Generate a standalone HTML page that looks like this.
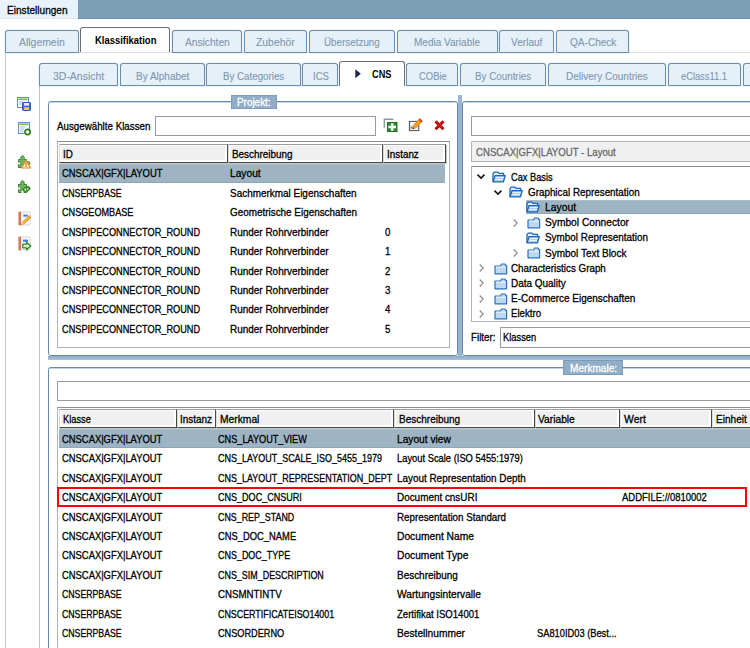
<!DOCTYPE html><html><head><meta charset="utf-8"><title>Einstellungen</title><style>
html,body{margin:0;padding:0;}
body{width:750px;height:648px;overflow:hidden;background:#fff;position:relative;font-family:"Liberation Sans",sans-serif;font-size:11px;color:#000;}
div,span{box-sizing:border-box;}
.a{position:absolute;}
.t{position:absolute;white-space:nowrap;line-height:14px;height:14px;transform-origin:0 50%;-webkit-text-stroke:0.3px;}
.tab{position:absolute;background:#e5f0f8;border:1px solid #688dad;border-radius:3px 3px 0 0;box-shadow:0 0 1px rgba(104,141,173,.8);}
.tabA{position:absolute;background:#fff;border:1px solid #6a7078;border-bottom:none;border-radius:3px 3px 0 0;}
.hd{position:absolute;background:#f0f0f0;border-right:1px solid #484848;border-bottom:1px solid #484848;border-top:1px solid #9c9c9c;border-left:1px solid #d8d8d8;box-shadow:inset -2px -2px 0 #fff,inset 1px 1px 0 #fff,1px 1px 0 rgba(90,90,90,.35);}
.sel{position:absolute;background:#9eb4c3;border-top:1px solid #a6bfd0;border-bottom:1px solid #8aa8bd;}
.inp{position:absolute;background:#fff;border:1px solid #9a9a9a;}
.gb{position:absolute;border:1px solid #668bac;border-radius:2.5px;box-shadow:inset 0 1px 0 rgba(140,170,198,.5);}
.gl{position:absolute;background:#91adc8;border:1px solid #7c9cba;}
svg{position:absolute;overflow:visible;}
</style></head><body>
<div class="a" style="left:0;top:0;width:750px;height:19px;background:#7b9eb5;border-bottom:1px solid #6c91ac;"></div>
<div class="a" style="left:0;top:0;width:78px;height:19px;background:#e9f2fa;border-bottom:1px solid #dbe8f3;"></div>
<div class="t" style="left:7.2px;top:3.1px;transform:scaleX(0.9173);">Einstellungen</div>
<div class="a" style="left:5px;top:52px;width:750px;height:600px;border-left:1px solid #c9c9c9;border-top:1px solid #dcdcdc;"></div>
<div class="tab" style="left:5px;top:29.6px;width:74px;height:23.0px;"></div>
<div class="t" style="left:19.0px;top:35.1px;transform:scaleX(0.948);color:#7f97b2;-webkit-text-stroke:0.1px;">Allgemein</div>
<div class="tabA" style="left:80px;top:27px;width:90px;height:25.4px;"></div>
<div class="t" style="left:94.6px;top:33.1px;transform:scaleX(0.8584);font-weight:bold;-webkit-text-stroke:0;">Klassifikation</div>
<div class="tab" style="left:172px;top:29.6px;width:70px;height:23.0px;"></div>
<div class="t" style="left:184.6px;top:35.1px;transform:scaleX(0.9273);color:#7f97b2;-webkit-text-stroke:0.1px;">Ansichten</div>
<div class="tab" style="left:244px;top:29.6px;width:63px;height:23.0px;"></div>
<div class="t" style="left:256.1px;top:35.1px;transform:scaleX(0.9443);color:#7f97b2;-webkit-text-stroke:0.1px;">Zubehör</div>
<div class="tab" style="left:309px;top:29.6px;width:86px;height:23.0px;"></div>
<div class="t" style="left:324.0px;top:35.1px;transform:scaleX(0.8946);color:#7f97b2;-webkit-text-stroke:0.1px;">Übersetzung</div>
<div class="tab" style="left:397px;top:29.6px;width:101px;height:23.0px;"></div>
<div class="t" style="left:414.2px;top:35.1px;transform:scaleX(0.9096);color:#7f97b2;-webkit-text-stroke:0.1px;">Media Variable</div>
<div class="tab" style="left:499px;top:29.6px;width:55px;height:23.0px;"></div>
<div class="t" style="left:511.0px;top:35.1px;transform:scaleX(0.9168);color:#7f97b2;-webkit-text-stroke:0.1px;">Verlauf</div>
<div class="tab" style="left:556px;top:29.6px;width:73px;height:23.0px;"></div>
<div class="t" style="left:569.6px;top:35.1px;transform:scaleX(0.9143);color:#7f97b2;-webkit-text-stroke:0.1px;">QA-Check</div>
<div class="a" style="left:39px;top:85px;width:750px;height:600px;border-left:1px solid #c4c4c4;"></div>
<div class="tab" style="left:39px;top:63px;width:79px;height:23px;"></div>
<div class="t" style="left:52.6px;top:68.5px;transform:scaleX(0.9517);color:#7f97b2;-webkit-text-stroke:0.1px;">3D-Ansicht</div>
<div class="tab" style="left:120px;top:63px;width:85px;height:23px;"></div>
<div class="t" style="left:135.6px;top:68.5px;transform:scaleX(0.9094);color:#7f97b2;-webkit-text-stroke:0.1px;">By Alphabet</div>
<div class="tab" style="left:206px;top:63px;width:95px;height:23px;"></div>
<div class="t" style="left:222.6px;top:68.5px;transform:scaleX(0.8858);color:#7f97b2;-webkit-text-stroke:0.1px;">By Categories</div>
<div class="tab" style="left:302px;top:63px;width:36px;height:23px;"></div>
<div class="t" style="left:312.6px;top:68.5px;transform:scaleX(0.8613);color:#7f97b2;-webkit-text-stroke:0.1px;">ICS</div>
<div class="tabA" style="left:339px;top:61px;width:66px;height:25px;"></div>
<svg style="left:355px;top:69px" width="7" height="10" viewBox="0 0 7 10"><path d="M0.3 0.3 L5.8 4.8 L0.3 9.3 Z" fill="#1a2452"/></svg>
<div class="t" style="left:372.0px;top:67.1px;transform:scaleX(0.835);font-weight:bold;-webkit-text-stroke:0;">CNS</div>
<div class="tab" style="left:406px;top:63px;width:52px;height:23px;"></div>
<div class="t" style="left:418.6px;top:68.5px;transform:scaleX(0.8579);color:#7f97b2;-webkit-text-stroke:0.1px;">COBie</div>
<div class="tab" style="left:460px;top:63px;width:86px;height:23px;"></div>
<div class="t" style="left:474.6px;top:68.5px;transform:scaleX(0.8923);color:#7f97b2;-webkit-text-stroke:0.1px;">By Countries</div>
<div class="tab" style="left:548px;top:63px;width:118px;height:23px;"></div>
<div class="t" style="left:566.1px;top:68.5px;transform:scaleX(0.9102);color:#7f97b2;-webkit-text-stroke:0.1px;">Delivery Countries</div>
<div class="tab" style="left:668px;top:63px;width:73px;height:23px;"></div>
<div class="t" style="left:681.0px;top:68.5px;transform:scaleX(0.8447);color:#7f97b2;-webkit-text-stroke:0.1px;">eClass11.1</div>
<div class="tab" style="left:743px;top:63px;width:57px;height:23px;"></div>
<svg style="left:16px;top:96px" width="16" height="16" viewBox="0 0 16 16"><rect x="1.5" y="1.5" width="11" height="10" fill="#f4f8fd" stroke="#5b8fd6"/><rect x="2.5" y="2.5" width="9" height="1.6" fill="#7db84a"/><rect x="3" y="5.5" width="4" height="1" fill="#a9c6ea"/><rect x="3" y="7.5" width="3" height="1" fill="#a9c6ea"/><rect x="6.5" y="6.5" width="8" height="8" rx="0.8" fill="#3b6fd0" stroke="#2d57b0"/><rect x="8" y="7" width="5" height="2.6" fill="#eaf1fb"/><rect x="8" y="11.3" width="5" height="2.6" fill="#f3d43c"/></svg>
<svg style="left:17px;top:121px" width="16" height="16" viewBox="0 0 16 16"><rect x="1.5" y="1.5" width="11" height="11" fill="#f4f8fd" stroke="#5b8fd6"/><rect x="2.5" y="2.5" width="9" height="1.6" fill="#7db84a"/><rect x="3" y="5.5" width="5" height="1" fill="#a9c6ea"/><rect x="3" y="7.5" width="4" height="1" fill="#a9c6ea"/><rect x="3" y="9.5" width="3" height="1" fill="#a9c6ea"/><circle cx="10.6" cy="11" r="2.6" fill="#fff" stroke="#2f7d1e" stroke-width="1.7"/></svg>
<svg style="left:17px;top:154px" width="16" height="16" viewBox="0 0 16 16"><path d="M1.5 5.5 H4.2 C3.2 4.6 3.6 1.8 5.5 1.8 C7.4 1.8 7.8 4.6 6.8 5.5 H9.5 V8 C10.4 7 13 7.4 13 9.2 C13 11 10.4 11.4 9.5 10.4 V13.5 H6.8 C7.6 12.4 7 11 5.5 11 C4 11 3.4 12.4 4.2 13.5 H1.5 V10.6 C2.6 11.4 3.8 10.8 3.8 9.4 C3.8 8 2.6 7.4 1.5 8.2 Z" fill="#6fb65e" stroke="#2e8428" stroke-width="0.9" stroke-linejoin="round"/><path d="M9 6.2 L13.5 14 L4.5 14 Z" fill="#fff4c8" stroke="#e8891c" stroke-width="1.2" stroke-linejoin="round"/><rect x="8.5" y="8.8" width="1" height="2.8" fill="#b34a00"/><rect x="8.5" y="12.1" width="1" height="0.9" fill="#b34a00"/></svg>
<svg style="left:17px;top:179px" width="16" height="16" viewBox="0 0 16 16"><path d="M1.5 5.5 H4.2 C3.2 4.6 3.6 1.8 5.5 1.8 C7.4 1.8 7.8 4.6 6.8 5.5 H9.5 V8 C10.4 7 13 7.4 13 9.2 C13 11 10.4 11.4 9.5 10.4 V13.5 H6.8 C7.6 12.4 7 11 5.5 11 C4 11 3.4 12.4 4.2 13.5 H1.5 V10.6 C2.6 11.4 3.8 10.8 3.8 9.4 C3.8 8 2.6 7.4 1.5 8.2 Z" fill="#6fb65e" stroke="#2e8428" stroke-width="0.9" stroke-linejoin="round"/><path d="M6.5 9.2 L11 7.6 L13.2 10.2 L9.5 13.2 L6.5 12 Z" fill="#4f9e40" stroke="#2f7d24" stroke-width="0.9"/><rect x="7.6" y="9.8" width="1.4" height="1.6" fill="#e8f4e0"/><rect x="10" y="9.2" width="1.3" height="1.6" fill="#d7c9c0"/></svg>
<svg style="left:17px;top:211px" width="16" height="16" viewBox="0 0 16 16"><rect x="2.2" y="1" width="11" height="13" rx="1.2" fill="#fbfbfb" stroke="#c9c9c9" stroke-width="0.8"/><rect x="1.2" y="0.8" width="2.6" height="13.4" fill="#d24a1e"/><rect x="1.2" y="0.8" width="1.2" height="13.4" fill="#e6c3b6"/><rect x="6.3" y="3.6" width="4.5" height="2" fill="#3f7be0"/><path d="M12.2 4.6 L14 6.4 L6.8 13 L4.4 13.8 L5.2 11.4 Z" fill="#f6b531" stroke="#d9822b" stroke-width="0.8" stroke-linejoin="round"/><path d="M4.4 13.8 L5.2 11.4 L6.8 13 Z" fill="#f3e3c8"/></svg>
<svg style="left:17px;top:236px" width="16" height="16" viewBox="0 0 16 16"><rect x="2.2" y="1" width="11" height="13" rx="1.2" fill="#fbfbfb" stroke="#c9c9c9" stroke-width="0.8"/><rect x="1.2" y="0.8" width="2.6" height="13.4" fill="#d24a1e"/><rect x="1.2" y="0.8" width="1.2" height="13.4" fill="#e6c3b6"/><rect x="6" y="3.6" width="5" height="2.2" fill="#3f7be0"/><path d="M5.8 8.2 L9.6 8.2 L9.6 6.2 L13.8 10 L9.6 13.8 L9.6 11.8 L5.8 11.8 Z" fill="#dff0d2" stroke="#2f8a24" stroke-width="1.3" stroke-linejoin="round"/></svg>
<div class="gb" style="left:48px;top:101px;width:410px;height:255px;"></div>
<div class="gl" style="left:231px;top:94.8px;width:46.4px;height:14.6px;"></div>
<div class="t" style="left:237.2px;top:95.1px;transform:scaleX(0.9009);color:#fff;">Projekt:</div>
<div class="t" style="left:56.6px;top:118.5px;transform:scaleX(0.8879);">Ausgewählte Klassen</div>
<div class="inp" style="left:155px;top:116px;width:221px;height:20px;"></div>
<svg style="left:383px;top:118px" width="15" height="15" viewBox="0 0 15 15"><path d="M1.3 9.8 L1.3 1.3 L10.5 1.3" fill="none" stroke="#8f999b" stroke-width="1.4"/><rect x="4.4" y="4.4" width="9.6" height="9.2" fill="#2f8a2c" stroke="#1c651c" stroke-width="0.9"/><path d="M9.2 5.2 V12.8 M5.4 9 H13" stroke="#fff" stroke-width="2.5"/></svg>
<svg style="left:408px;top:118px" width="15" height="15" viewBox="0 0 15 15"><rect x="1.4" y="3.4" width="9.4" height="9.2" fill="#f1f3f5" stroke="#4c4f52" stroke-width="1"/><rect x="2.6" y="8.6" width="2" height="2" fill="#6f7780"/><path d="M11.8 0.6 L14.4 3.2 L7.6 10 L4.6 10.8 L5.4 7.6 Z" fill="#f6a21e" stroke="#d9701a" stroke-width="0.8" stroke-linejoin="round"/><path d="M11.8 0.6 L14.4 3.2 L13.2 4.4 L10.6 1.8 Z" fill="#dd3b22"/><path d="M4.6 10.8 L4.95 9.4 L6 10.4 Z" fill="#111"/></svg>
<svg style="left:434px;top:120px" width="11" height="11" viewBox="0 0 11 11"><path d="M1.5 1.4 L9.5 9.2 M9.5 1.4 L1.5 9.2" stroke="#8e0a0a" stroke-width="2.9" stroke-linecap="butt"/><path d="M1.7 1.6 L9.3 9 M9.3 1.6 L1.7 9" stroke="#d01414" stroke-width="1.7" stroke-linecap="butt"/></svg>
<div class="a" style="left:57px;top:141px;width:393px;height:207px;border:1px solid #b2b2b2;border-top-color:#8e8e8e;background:#fff;"></div>
<div class="hd" style="left:59px;top:144px;width:169px;height:19px;"></div>
<div class="hd" style="left:228px;top:144px;width:155px;height:19px;"></div>
<div class="hd" style="left:383px;top:144px;width:63px;height:19px;"></div>
<div class="t" style="left:63.2px;top:146.7px;transform:scaleX(0.8909);">ID</div>
<div class="t" style="left:232.1px;top:146.7px;transform:scaleX(0.9007);">Beschreibung</div>
<div class="t" style="left:386.6px;top:146.7px;transform:scaleX(0.8966);">Instanz</div>
<div class="sel" style="left:59px;top:164px;width:386px;height:19px;"></div>
<div class="t" style="left:61.6px;top:166.3px;transform:scaleX(0.8562);">CNSCAX|GFX|LAYOUT</div>
<div class="t" style="left:230.3px;top:166.3px;transform:scaleX(0.9294);">Layout</div>
<div class="t" style="left:61.6px;top:185.75px;transform:scaleX(0.7925);">CNSERPBASE</div>
<div class="t" style="left:230.3px;top:185.75px;transform:scaleX(0.9035);">Sachmerkmal Eigenschaften</div>
<div class="t" style="left:61.6px;top:205.2px;transform:scaleX(0.8284);">CNSGEOMBASE</div>
<div class="t" style="left:230.3px;top:205.2px;transform:scaleX(0.8998);">Geometrische Eigenschaften</div>
<div class="t" style="left:61.6px;top:224.65px;transform:scaleX(0.8348);">CNSPIPECONNECTOR_ROUND</div>
<div class="t" style="left:230.3px;top:224.65px;transform:scaleX(0.905);">Runder Rohrverbinder</div>
<div class="t" style="left:385.2px;top:224.65px;transform:scaleX(0.8816);">0</div>
<div class="t" style="left:61.6px;top:244.1px;transform:scaleX(0.8348);">CNSPIPECONNECTOR_ROUND</div>
<div class="t" style="left:230.3px;top:244.1px;transform:scaleX(0.905);">Runder Rohrverbinder</div>
<div class="t" style="left:385.2px;top:244.1px;transform:scaleX(0.8816);">1</div>
<div class="t" style="left:61.6px;top:263.55px;transform:scaleX(0.8348);">CNSPIPECONNECTOR_ROUND</div>
<div class="t" style="left:230.3px;top:263.55px;transform:scaleX(0.905);">Runder Rohrverbinder</div>
<div class="t" style="left:385.2px;top:263.55px;transform:scaleX(0.8816);">2</div>
<div class="t" style="left:61.6px;top:283.0px;transform:scaleX(0.8348);">CNSPIPECONNECTOR_ROUND</div>
<div class="t" style="left:230.3px;top:283.0px;transform:scaleX(0.905);">Runder Rohrverbinder</div>
<div class="t" style="left:385.2px;top:283.0px;transform:scaleX(0.8816);">3</div>
<div class="t" style="left:61.6px;top:302.45px;transform:scaleX(0.8348);">CNSPIPECONNECTOR_ROUND</div>
<div class="t" style="left:230.3px;top:302.45px;transform:scaleX(0.905);">Runder Rohrverbinder</div>
<div class="t" style="left:385.2px;top:302.45px;transform:scaleX(0.8816);">4</div>
<div class="t" style="left:61.6px;top:321.9px;transform:scaleX(0.8348);">CNSPIPECONNECTOR_ROUND</div>
<div class="t" style="left:230.3px;top:321.9px;transform:scaleX(0.905);">Runder Rohrverbinder</div>
<div class="t" style="left:385.2px;top:321.9px;transform:scaleX(0.8816);">5</div>
<div class="a" style="left:458px;top:95px;width:4px;height:262px;background:#9ab6cf;"></div>
<div class="gb" style="left:462px;top:101px;width:300px;height:255px;"></div>
<div class="inp" style="left:471px;top:116px;width:300px;height:20px;"></div>
<div class="inp" style="left:471px;top:141px;width:300px;height:21px;background:#f0f0f0;border-color:#b4b4b4;"></div>
<div class="t" style="left:475.6px;top:144.7px;transform:scaleX(0.8739);color:#6a6a6a;">CNSCAX|GFX|LAYOUT - Layout</div>
<div class="a" style="left:471px;top:166px;width:300px;height:156px;border:1px solid #b2b2b2;border-top-color:#8e8e8e;background:#fff;"></div>
<div class="sel" style="left:526.4px;top:199.6px;width:230px;height:14.6px;"></div>
<div class="t" style="left:511.2px;top:169.5px;transform:scaleX(0.8399);">Cax Basis</div>
<svg style="left:492.1px;top:170.8px" width="14" height="12" viewBox="0 0 14 12"><path d="M1 10.6 L1 2.6 L2.2 1.2 L6 1.2 L7 2.4 L11.6 2.4 L11.6 4.4" fill="#e2effa" stroke="#1a66b6" stroke-width="1.3" stroke-linejoin="round"/><path d="M1 10.8 L3 4.6 L13.3 4.6 L11.4 10.8 Z" fill="#a9d0f2" stroke="#1a66b6" stroke-width="1.3" stroke-linejoin="round"/><path d="M3.8 6.5 L11.6 6.5 M3.2 8.5 L11 8.5" stroke="#eef6fd" stroke-width="0.9"/></svg>
<svg style="left:476.9px;top:174.4px" width="8" height="5" viewBox="0 0 8 5"><path d="M0.5 0.6 L4 4.1 L7.5 0.6" fill="none" stroke="#111" stroke-width="1.5"/></svg>
<div class="t" style="left:528.1px;top:184.72px;transform:scaleX(0.8954);">Graphical Representation</div>
<svg style="left:509.0px;top:186.0px" width="14" height="12" viewBox="0 0 14 12"><path d="M1 10.6 L1 2.6 L2.2 1.2 L6 1.2 L7 2.4 L11.6 2.4 L11.6 4.4" fill="#e2effa" stroke="#1a66b6" stroke-width="1.3" stroke-linejoin="round"/><path d="M1 10.8 L3 4.6 L13.3 4.6 L11.4 10.8 Z" fill="#a9d0f2" stroke="#1a66b6" stroke-width="1.3" stroke-linejoin="round"/><path d="M3.8 6.5 L11.6 6.5 M3.2 8.5 L11 8.5" stroke="#eef6fd" stroke-width="0.9"/></svg>
<svg style="left:493.8px;top:189.6px" width="8" height="5" viewBox="0 0 8 5"><path d="M0.5 0.6 L4 4.1 L7.5 0.6" fill="none" stroke="#111" stroke-width="1.5"/></svg>
<div class="t" style="left:545.0px;top:199.94px;transform:scaleX(0.9385);">Layout</div>
<svg style="left:525.9px;top:201.2px" width="14" height="12" viewBox="0 0 14 12"><path d="M1 10.6 L1 2.6 L2.2 1.2 L6 1.2 L7 2.4 L11.6 2.4 L11.6 4.4" fill="#e2effa" stroke="#1a66b6" stroke-width="1.3" stroke-linejoin="round"/><path d="M1 10.8 L3 4.6 L13.3 4.6 L11.4 10.8 Z" fill="#a9d0f2" stroke="#1a66b6" stroke-width="1.3" stroke-linejoin="round"/><path d="M3.8 6.5 L11.6 6.5 M3.2 8.5 L11 8.5" stroke="#eef6fd" stroke-width="0.9"/></svg>
<div class="t" style="left:545.0px;top:215.16px;transform:scaleX(0.9282);">Symbol Connector</div>
<svg style="left:527.3px;top:216.9px" width="14" height="12" viewBox="0 0 14 12"><path d="M1 10.8 L1 3 L6.4 3 L7.6 1 L11 1 L12 2.6 L12.6 2.6 L12.6 10.8 Z" fill="#bcd9f2" stroke="#2a72bc" stroke-width="1.2" stroke-linejoin="round"/><path d="M2 4.2 L11.6 4.2" stroke="#eef6fc" stroke-width="1"/></svg>
<svg style="left:512.8px;top:218.5px" width="5" height="8" viewBox="0 0 5 8"><path d="M0.7 0.5 L4.2 4 L0.7 7.5" fill="none" stroke="#8a8a8a" stroke-width="1.1"/></svg>
<div class="t" style="left:545.0px;top:230.38px;transform:scaleX(0.9008);">Symbol Representation</div>
<svg style="left:525.9px;top:231.7px" width="14" height="12" viewBox="0 0 14 12"><path d="M1 10.6 L1 2.6 L2.2 1.2 L6 1.2 L7 2.4 L11.6 2.4 L11.6 4.4" fill="#e2effa" stroke="#1a66b6" stroke-width="1.3" stroke-linejoin="round"/><path d="M1 10.8 L3 4.6 L13.3 4.6 L11.4 10.8 Z" fill="#a9d0f2" stroke="#1a66b6" stroke-width="1.3" stroke-linejoin="round"/><path d="M3.8 6.5 L11.6 6.5 M3.2 8.5 L11 8.5" stroke="#eef6fd" stroke-width="0.9"/></svg>
<div class="t" style="left:545.0px;top:245.6px;transform:scaleX(0.9078);">Symbol Text Block</div>
<svg style="left:527.3px;top:247.3px" width="14" height="12" viewBox="0 0 14 12"><path d="M1 10.8 L1 3 L6.4 3 L7.6 1 L11 1 L12 2.6 L12.6 2.6 L12.6 10.8 Z" fill="#bcd9f2" stroke="#2a72bc" stroke-width="1.2" stroke-linejoin="round"/><path d="M2 4.2 L11.6 4.2" stroke="#eef6fc" stroke-width="1"/></svg>
<svg style="left:512.8px;top:248.9px" width="5" height="8" viewBox="0 0 5 8"><path d="M0.7 0.5 L4.2 4 L0.7 7.5" fill="none" stroke="#8a8a8a" stroke-width="1.1"/></svg>
<div class="t" style="left:511.2px;top:260.82px;transform:scaleX(0.8912);">Characteristics Graph</div>
<svg style="left:493.5px;top:262.5px" width="14" height="12" viewBox="0 0 14 12"><path d="M1 10.8 L1 3 L6.4 3 L7.6 1 L11 1 L12 2.6 L12.6 2.6 L12.6 10.8 Z" fill="#bcd9f2" stroke="#2a72bc" stroke-width="1.2" stroke-linejoin="round"/><path d="M2 4.2 L11.6 4.2" stroke="#eef6fc" stroke-width="1"/></svg>
<svg style="left:479.0px;top:264.1px" width="5" height="8" viewBox="0 0 5 8"><path d="M0.7 0.5 L4.2 4 L0.7 7.5" fill="none" stroke="#8a8a8a" stroke-width="1.1"/></svg>
<div class="t" style="left:511.2px;top:276.04px;transform:scaleX(0.9053);">Data Quality</div>
<svg style="left:493.5px;top:277.7px" width="14" height="12" viewBox="0 0 14 12"><path d="M1 10.8 L1 3 L6.4 3 L7.6 1 L11 1 L12 2.6 L12.6 2.6 L12.6 10.8 Z" fill="#bcd9f2" stroke="#2a72bc" stroke-width="1.2" stroke-linejoin="round"/><path d="M2 4.2 L11.6 4.2" stroke="#eef6fc" stroke-width="1"/></svg>
<svg style="left:479.0px;top:279.3px" width="5" height="8" viewBox="0 0 5 8"><path d="M0.7 0.5 L4.2 4 L0.7 7.5" fill="none" stroke="#8a8a8a" stroke-width="1.1"/></svg>
<div class="t" style="left:511.2px;top:291.26px;transform:scaleX(0.9043);">E-Commerce Eigenschaften</div>
<svg style="left:493.5px;top:293.0px" width="14" height="12" viewBox="0 0 14 12"><path d="M1 10.8 L1 3 L6.4 3 L7.6 1 L11 1 L12 2.6 L12.6 2.6 L12.6 10.8 Z" fill="#bcd9f2" stroke="#2a72bc" stroke-width="1.2" stroke-linejoin="round"/><path d="M2 4.2 L11.6 4.2" stroke="#eef6fc" stroke-width="1"/></svg>
<svg style="left:479.0px;top:294.6px" width="5" height="8" viewBox="0 0 5 8"><path d="M0.7 0.5 L4.2 4 L0.7 7.5" fill="none" stroke="#8a8a8a" stroke-width="1.1"/></svg>
<div class="t" style="left:511.2px;top:306.48px;transform:scaleX(0.8818);">Elektro</div>
<svg style="left:493.5px;top:308.2px" width="14" height="12" viewBox="0 0 14 12"><path d="M1 10.8 L1 3 L6.4 3 L7.6 1 L11 1 L12 2.6 L12.6 2.6 L12.6 10.8 Z" fill="#bcd9f2" stroke="#2a72bc" stroke-width="1.2" stroke-linejoin="round"/><path d="M2 4.2 L11.6 4.2" stroke="#eef6fc" stroke-width="1"/></svg>
<svg style="left:479.0px;top:309.8px" width="5" height="8" viewBox="0 0 5 8"><path d="M0.7 0.5 L4.2 4 L0.7 7.5" fill="none" stroke="#8a8a8a" stroke-width="1.1"/></svg>
<div class="t" style="left:471.0px;top:330.3px;transform:scaleX(0.8873);">Filter:</div>
<div class="inp" style="left:500px;top:327px;width:300px;height:21px;"></div>
<div class="t" style="left:502.6px;top:330.3px;transform:scaleX(0.8482);">Klassen</div>
<div class="a" style="left:48px;top:356px;width:710px;height:4px;background:linear-gradient(#8cabc7 0,#9ab6cf 50%,#aac3d9 100%);"></div>
<div class="gb" style="left:48px;top:367px;width:720px;height:300px;"></div>
<div class="gl" style="left:563px;top:360.4px;width:60px;height:15px;"></div>
<div class="t" style="left:569.6px;top:360.9px;transform:scaleX(0.9173);color:#fff;">Merkmale:</div>
<div class="inp" style="left:57px;top:381px;width:720px;height:20px;"></div>
<div class="a" style="left:57px;top:407px;width:720px;height:260px;border:1px solid #b2b2b2;border-top-color:#8e8e8e;background:#fff;"></div>
<div class="hd" style="left:59px;top:409px;width:118px;height:19px;"></div>
<div class="t" style="left:63.2px;top:412.3px;transform:scaleX(0.8416);">Klasse</div>
<div class="hd" style="left:177px;top:409px;width:39px;height:19px;"></div>
<div class="t" style="left:180.0px;top:412.3px;transform:scaleX(0.9022);">Instanz</div>
<div class="hd" style="left:216px;top:409px;width:178px;height:19px;"></div>
<div class="t" style="left:220.0px;top:412.3px;transform:scaleX(0.9343);">Merkmal</div>
<div class="hd" style="left:394px;top:409px;width:141px;height:19px;"></div>
<div class="t" style="left:398.6px;top:412.3px;transform:scaleX(0.9096);">Beschreibung</div>
<div class="hd" style="left:535px;top:409px;width:85px;height:19px;"></div>
<div class="t" style="left:538.4px;top:412.3px;transform:scaleX(0.9305);">Variable</div>
<div class="hd" style="left:620px;top:409px;width:92px;height:19px;"></div>
<div class="t" style="left:623.6px;top:412.3px;transform:scaleX(0.9465);">Wert</div>
<div class="hd" style="left:712px;top:409px;width:78px;height:19px;"></div>
<div class="t" style="left:715.6px;top:412.3px;transform:scaleX(0.9156);">Einheit</div>
<div class="sel" style="left:59px;top:429.4px;width:700px;height:19px;"></div>
<div class="t" style="left:61.6px;top:431.7px;transform:scaleX(0.8545);">CNSCAX|GFX|LAYOUT</div>
<div class="t" style="left:218.2px;top:431.7px;transform:scaleX(0.8316);">CNS_LAYOUT_VIEW</div>
<div class="t" style="left:397.0px;top:431.7px;transform:scaleX(0.9261);">Layout view</div>
<div class="t" style="left:61.6px;top:451.15px;transform:scaleX(0.8545);">CNSCAX|GFX|LAYOUT</div>
<div class="t" style="left:218.2px;top:451.15px;transform:scaleX(0.8155);">CNS_LAYOUT_SCALE_ISO_5455_1979</div>
<div class="t" style="left:397.0px;top:451.15px;transform:scaleX(0.8501);">Layout Scale (ISO 5455:1979)</div>
<div class="t" style="left:61.6px;top:470.6px;transform:scaleX(0.8545);">CNSCAX|GFX|LAYOUT</div>
<div class="t" style="left:218.2px;top:470.6px;transform:scaleX(0.8166);">CNS_LAYOUT_REPRESENTATION_DEPT</div>
<div class="t" style="left:397.0px;top:470.6px;transform:scaleX(0.9);">Layout Representation Depth</div>
<div class="t" style="left:61.6px;top:490.05px;transform:scaleX(0.8545);">CNSCAX|GFX|LAYOUT</div>
<div class="t" style="left:218.2px;top:490.05px;transform:scaleX(0.8209);">CNS_DOC_CNSURI</div>
<div class="t" style="left:397.0px;top:490.05px;transform:scaleX(0.9007);">Document cnsURI</div>
<div class="t" style="left:622.0px;top:490.05px;transform:scaleX(0.8613);">ADDFILE://0810002</div>
<div class="t" style="left:61.6px;top:509.5px;transform:scaleX(0.8545);">CNSCAX|GFX|LAYOUT</div>
<div class="t" style="left:218.2px;top:509.5px;transform:scaleX(0.8059);">CNS_REP_STAND</div>
<div class="t" style="left:397.0px;top:509.5px;transform:scaleX(0.8912);">Representation Standard</div>
<div class="t" style="left:61.6px;top:528.95px;transform:scaleX(0.8545);">CNSCAX|GFX|LAYOUT</div>
<div class="t" style="left:218.2px;top:528.95px;transform:scaleX(0.8529);">CNS_DOC_NAME</div>
<div class="t" style="left:397.0px;top:528.95px;transform:scaleX(0.9328);">Document Name</div>
<div class="t" style="left:61.6px;top:548.4px;transform:scaleX(0.8545);">CNSCAX|GFX|LAYOUT</div>
<div class="t" style="left:218.2px;top:548.4px;transform:scaleX(0.8145);">CNS_DOC_TYPE</div>
<div class="t" style="left:397.0px;top:548.4px;transform:scaleX(0.9292);">Document Type</div>
<div class="t" style="left:61.6px;top:567.85px;transform:scaleX(0.8545);">CNSCAX|GFX|LAYOUT</div>
<div class="t" style="left:218.2px;top:567.85px;transform:scaleX(0.8126);">CNS_SIM_DESCRIPTION</div>
<div class="t" style="left:397.0px;top:567.85px;transform:scaleX(0.9037);">Beschreibung</div>
<div class="t" style="left:61.6px;top:587.3px;transform:scaleX(0.7925);">CNSERPBASE</div>
<div class="t" style="left:218.2px;top:587.3px;transform:scaleX(0.882);">CNSMNTINTV</div>
<div class="t" style="left:397.0px;top:587.3px;transform:scaleX(0.9263);">Wartungsintervalle</div>
<div class="t" style="left:61.6px;top:606.75px;transform:scaleX(0.7925);">CNSERPBASE</div>
<div class="t" style="left:218.2px;top:606.75px;transform:scaleX(0.8077);">CNSCERTIFICATEISO14001</div>
<div class="t" style="left:397.0px;top:606.75px;transform:scaleX(0.8694);">Zertifikat ISO14001</div>
<div class="t" style="left:61.6px;top:626.2px;transform:scaleX(0.7925);">CNSERPBASE</div>
<div class="t" style="left:218.2px;top:626.2px;transform:scaleX(0.8332);">CNSORDERNO</div>
<div class="t" style="left:397.0px;top:626.2px;transform:scaleX(0.9269);">Bestellnummer</div>
<div class="t" style="left:536.8px;top:626.2px;transform:scaleX(0.8453);">SA810ID03 (Best...</div>
<div class="a" style="left:57px;top:487px;width:690px;height:20px;border:2px solid #fd0204;"></div>
</body></html>
